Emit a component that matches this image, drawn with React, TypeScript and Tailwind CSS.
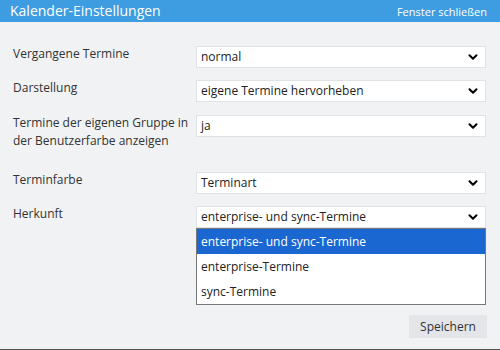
import { ChevronDown } from "lucide-react";

const rows = [
  { label: "Vergangene Termine", value: "normal", mt: "mt-[24px]" },
  { label: "Darstellung", value: "eigene Termine hervorheben", mt: "mt-[12px]" },
  { label: "Termine der eigenen Gruppe in der Benutzerfarbe anzeigen", value: "ja", mt: "mt-[13px]" },
  { label: "Terminfarbe", value: "Terminart", mt: "mt-[22px]" },
];

const options = ["enterprise- und sync-Termine", "enterprise-Termine", "sync-Termine"];

function FakeSelect({ value }: { value: string }) {
  return (
    <div className="w-[290px] h-[22px] bg-white border border-[#e0e3e6] flex items-center justify-between pl-[4px] pr-[5px] text-[12px] text-[#222]">
      <span>{value}</span>
      <ChevronDown size={14} strokeWidth={3.5} className="text-black" />
    </div>
  );
}

export default function App() {
  return (
    <div className="w-[500px] h-[350px] bg-[#f0f2f4] border-b border-[#555] flex flex-col font-['Open_Sans',sans-serif] overflow-hidden">
      <div className="h-[22px] bg-[#3e9ce0] flex items-center justify-between pl-[10px] pr-[13px] text-white">
        <span className="text-[14px] leading-none">Kalender-Einstellungen</span>
        <span className="text-[11px] leading-none">Fenster schließen</span>
      </div>

      <div className="pl-[13px] flex flex-col">
        {rows.map((r) => (
          <div key={r.label} className={`flex items-start ${r.mt}`}>
            <div className="w-[183px] text-[12px] leading-[18px] text-[#333] pr-[6px] -mt-[1px]">
              {r.label}
            </div>
            <FakeSelect value={r.value} />
          </div>
        ))}

        <div className="flex items-start mt-[12px]">
          <div className="w-[183px] text-[12px] leading-[18px] text-[#333] -mt-[1px]">Herkunft</div>
          <div className="relative">
            <FakeSelect value="enterprise- und sync-Termine" />
            <div className="absolute left-0 top-[22px] w-[290px] bg-white border border-[#777] text-[12px] text-[#222]">
              {options.map((o, i) => (
                <div
                  key={o}
                  className={`h-[25px] flex items-center pl-[4px] ${i === 0 ? "bg-[#1a67d2] text-white" : ""}`}
                >
                  {o}
                </div>
              ))}
            </div>
          </div>
        </div>
      </div>

      <div className="flex justify-end pr-[13px] mt-auto mb-[11px]">
        <button className="w-[78px] h-[23px] bg-[#e3e5e8] text-[12px] text-[#333]">Speichern</button>
      </div>
    </div>
  );
}
